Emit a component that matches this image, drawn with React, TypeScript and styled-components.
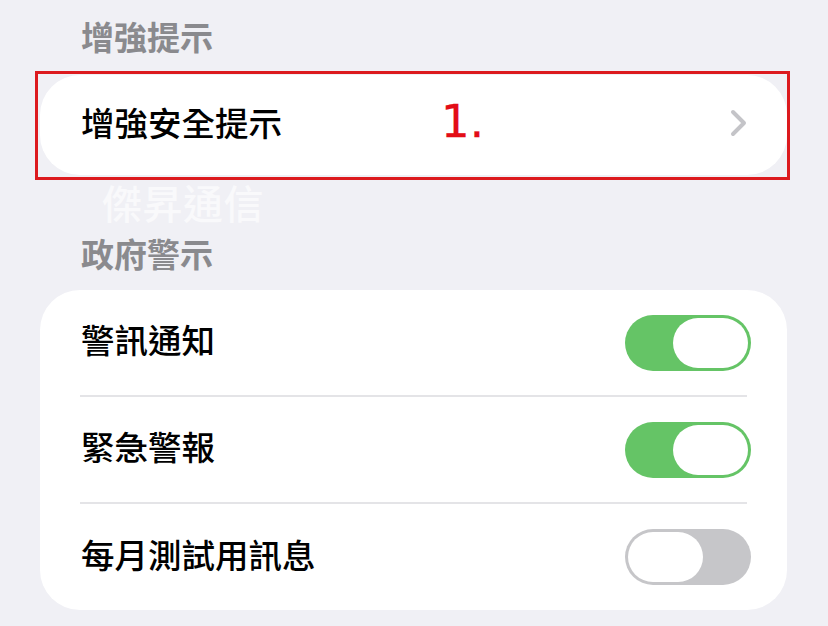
import React from "react";
import styled, { createGlobalStyle } from "styled-components";

const Global = createGlobalStyle`
  html, body { margin: 0; padding: 0; background: #f0f0f5; }
  body { font-family: "Noto Sans CJK TC", "Noto Sans", sans-serif; }
`;

const Page = styled.div`
  position: relative;
  width: 828px;
  height: 626px;
  overflow: hidden;
  box-sizing: border-box;
  padding: 16px 41px 0 40px;
  background: #f0f0f5;
`;

const SectionTitle = styled.div<{ $mt?: number }>`
  margin: ${(p) => p.$mt ?? 0}px 0 0 41px;
  height: 40px;
  line-height: 40px;
  font-size: 33px;
  font-weight: 700;
  color: #8a8a8e;
`;

const Card = styled.div<{ $mt: number }>`
  position: relative;
  margin-top: ${(p) => p.$mt}px;
  background: #ffffff;
  border-radius: 40px;
  display: flex;
  flex-direction: column;
`;

const Row = styled.div<{ $h: number; $pr?: number }>`
  height: ${(p) => p.$h}px;
  display: flex;
  align-items: center;
  justify-content: space-between;
  padding: 0 ${(p) => p.$pr ?? 36}px 0 41px;
`;

const Label = styled.span`
  display: inline-block;
  padding-bottom: 7px;
  line-height: 44px;
  font-size: 33.5px;
  font-weight: 500;
  color: #000;
`;

const Separator = styled.div`
  height: 2px;
  margin: 0 40px;
  background: #e4e4e7;
`;

const Track = styled.div<{ $on: boolean }>`
  width: 126px;
  height: 56px;
  border-radius: 28px;
  background: ${(p) => (p.$on ? "#65c466" : "#c6c6c9")};
  display: flex;
  align-items: center;
  justify-content: ${(p) => (p.$on ? "flex-end" : "flex-start")};
  padding: 0 3px;
  box-sizing: border-box;
`;

const Knob = styled.div`
  width: 75px;
  height: 50px;
  border-radius: 25px;
  background: #ffffff;
`;

const Highlight = styled.div`
  position: absolute;
  left: -5px;
  right: -3px;
  top: -4px;
  bottom: -5px;
  border: 3px solid #dc1a1e;
  pointer-events: none;
`;

const Step = styled.span`
  position: absolute;
  left: 401px;
  top: 17px;
  font-family: "DejaVu Sans", sans-serif;
  font-size: 45px;
  line-height: 60px;
  color: #e30d16;
  -webkit-text-stroke: 0.3px #e30d16;
`;

const Watermark = styled.div`
  position: absolute;
  left: 102px;
  top: 174px;
  font-size: 40px;
  line-height: 56px;
  font-weight: 500;
  color: #f9f9fb;
  letter-spacing: 0.5px;
  pointer-events: none;
`;

const Chevron = () => (
  <svg width="18" height="28" viewBox="0 0 18 28" style={{ marginBottom: 4 }}>
    <path d="M3 3 L14 14 L3 25" fill="none" stroke="#c4c4c8" strokeWidth="4" strokeLinecap="round" strokeLinejoin="round" />
  </svg>
);

const Toggle = ({ on }: { on: boolean }) => (
  <Track $on={on}>
    <Knob />
  </Track>
);

export default function App() {
  return (
    <>
      <Global />
      <Page>
        <SectionTitle>增強提示</SectionTitle>
        <Card $mt={19}>
          <Row $h={100} $pr={39}>
            <Label>增強安全提示</Label>
            <Chevron />
          </Row>
          <Highlight />
          <Step>1.</Step>
        </Card>
        <Watermark>傑昇通信</Watermark>
        <SectionTitle $mt={58}>政府警示</SectionTitle>
        <Card $mt={17}>
          <Row $h={105}>
            <Label>警訊通知</Label>
            <Toggle on />
          </Row>
          <Separator />
          <Row $h={105}>
            <Label>緊急警報</Label>
            <Toggle on />
          </Row>
          <Separator />
          <Row $h={106}>
            <Label>每月測試用訊息</Label>
            <Toggle on={false} />
          </Row>
        </Card>
      </Page>
    </>
  );
}
